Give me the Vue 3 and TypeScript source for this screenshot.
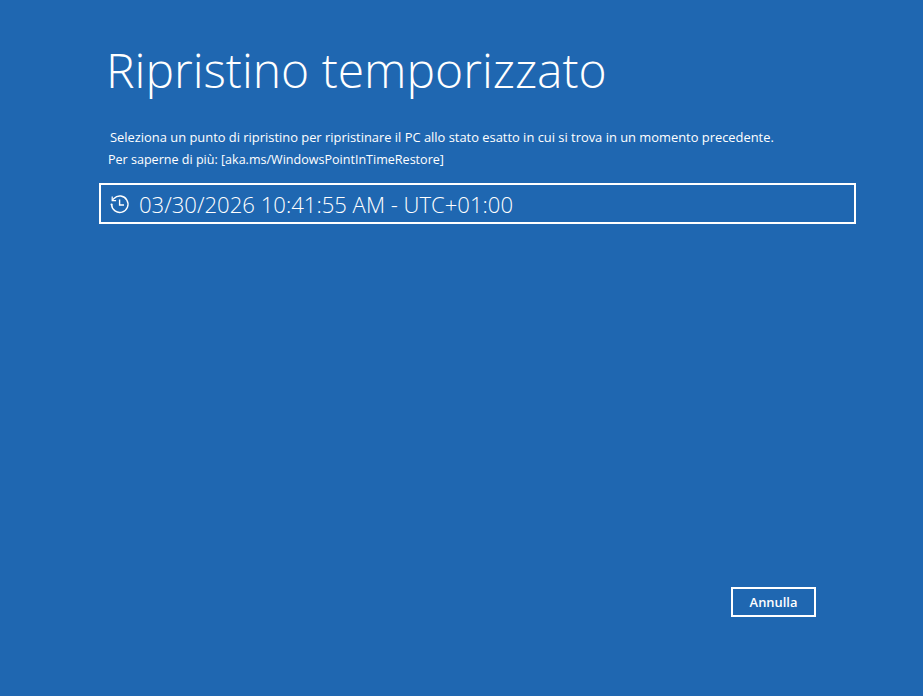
<script setup lang="ts">
const title: string = 'Ripristino temporizzato'
</script>

<template>
  <main class="page">
    <h1 class="title">{{ title }}</h1>
    <p class="line first">Seleziona un punto di ripristino per ripristinare il PC allo stato esatto in cui si trova in un momento precedente.</p>
    <p class="line second">Per saperne di più: [aka.ms/WindowsPointInTimeRestore]</p>
    <div class="item">
      <svg class="icon" width="22" height="22" viewBox="0 0 22 22" fill="none" stroke="#fff" stroke-width="1.4">
        <path d="M2.6 11.5A8.2 8.2 0 1 0 5 5.4L3.2 7.4" />
        <path d="M3.2 3.6V7.6H7.1" stroke-width="1.2" />
        <path d="M10.6 6.5V12H15" />
        <circle cx="2.6" cy="11.5" r="1.1" fill="#fff" stroke="none" />
      </svg>
      <span class="stamp">03/30/2026 10:41:55 AM - UTC+01:00</span>
    </div>
    <div class="actions">
      <button class="cancel" type="button">Annulla</button>
    </div>
  </main>
</template>

<style scoped>
.page {
  width: 923px;
  height: 696px;
  box-sizing: border-box;
  background: #1f67b1;
  color: #fff;
  font-family: "Open Sans", "Noto Sans", sans-serif;
  padding: 38px 67px 0 99px;
  display: flex;
  flex-direction: column;
}
.title {
  margin: 0 0 0 7px;
  font-size: 48px;
  font-weight: 300;
  line-height: 64px;
  white-space: nowrap;
}
.line {
  margin: 0;
  line-height: 22px;
  white-space: nowrap;
}
.first { margin: 24px 0 0 11px; font-size: 12.9px; }
.second { margin: 1px 0 0 9px; font-size: 12.55px; }
.item {
  margin-top: 12px;
  height: 41px;
  box-sizing: border-box;
  border: 2px solid #fff;
  display: flex;
  align-items: center;
  padding-left: 8px;
  gap: 8px;
}
.icon { flex: none; }
.stamp {
  font-size: 22.1px;
  font-weight: 300;
  white-space: nowrap;
}
.actions {
  margin-top: 363px;
  display: flex;
  justify-content: flex-end;
  padding-right: 40px;
}
.cancel {
  width: 85px;
  height: 30px;
  box-sizing: border-box;
  background: transparent;
  border: 2px solid #fff;
  color: #fff;
  font: 600 12.9px "Open Sans", sans-serif;
  padding: 0;
}
</style>

<style>
html, body { margin: 0; background: #1f67b1; }
</style>
